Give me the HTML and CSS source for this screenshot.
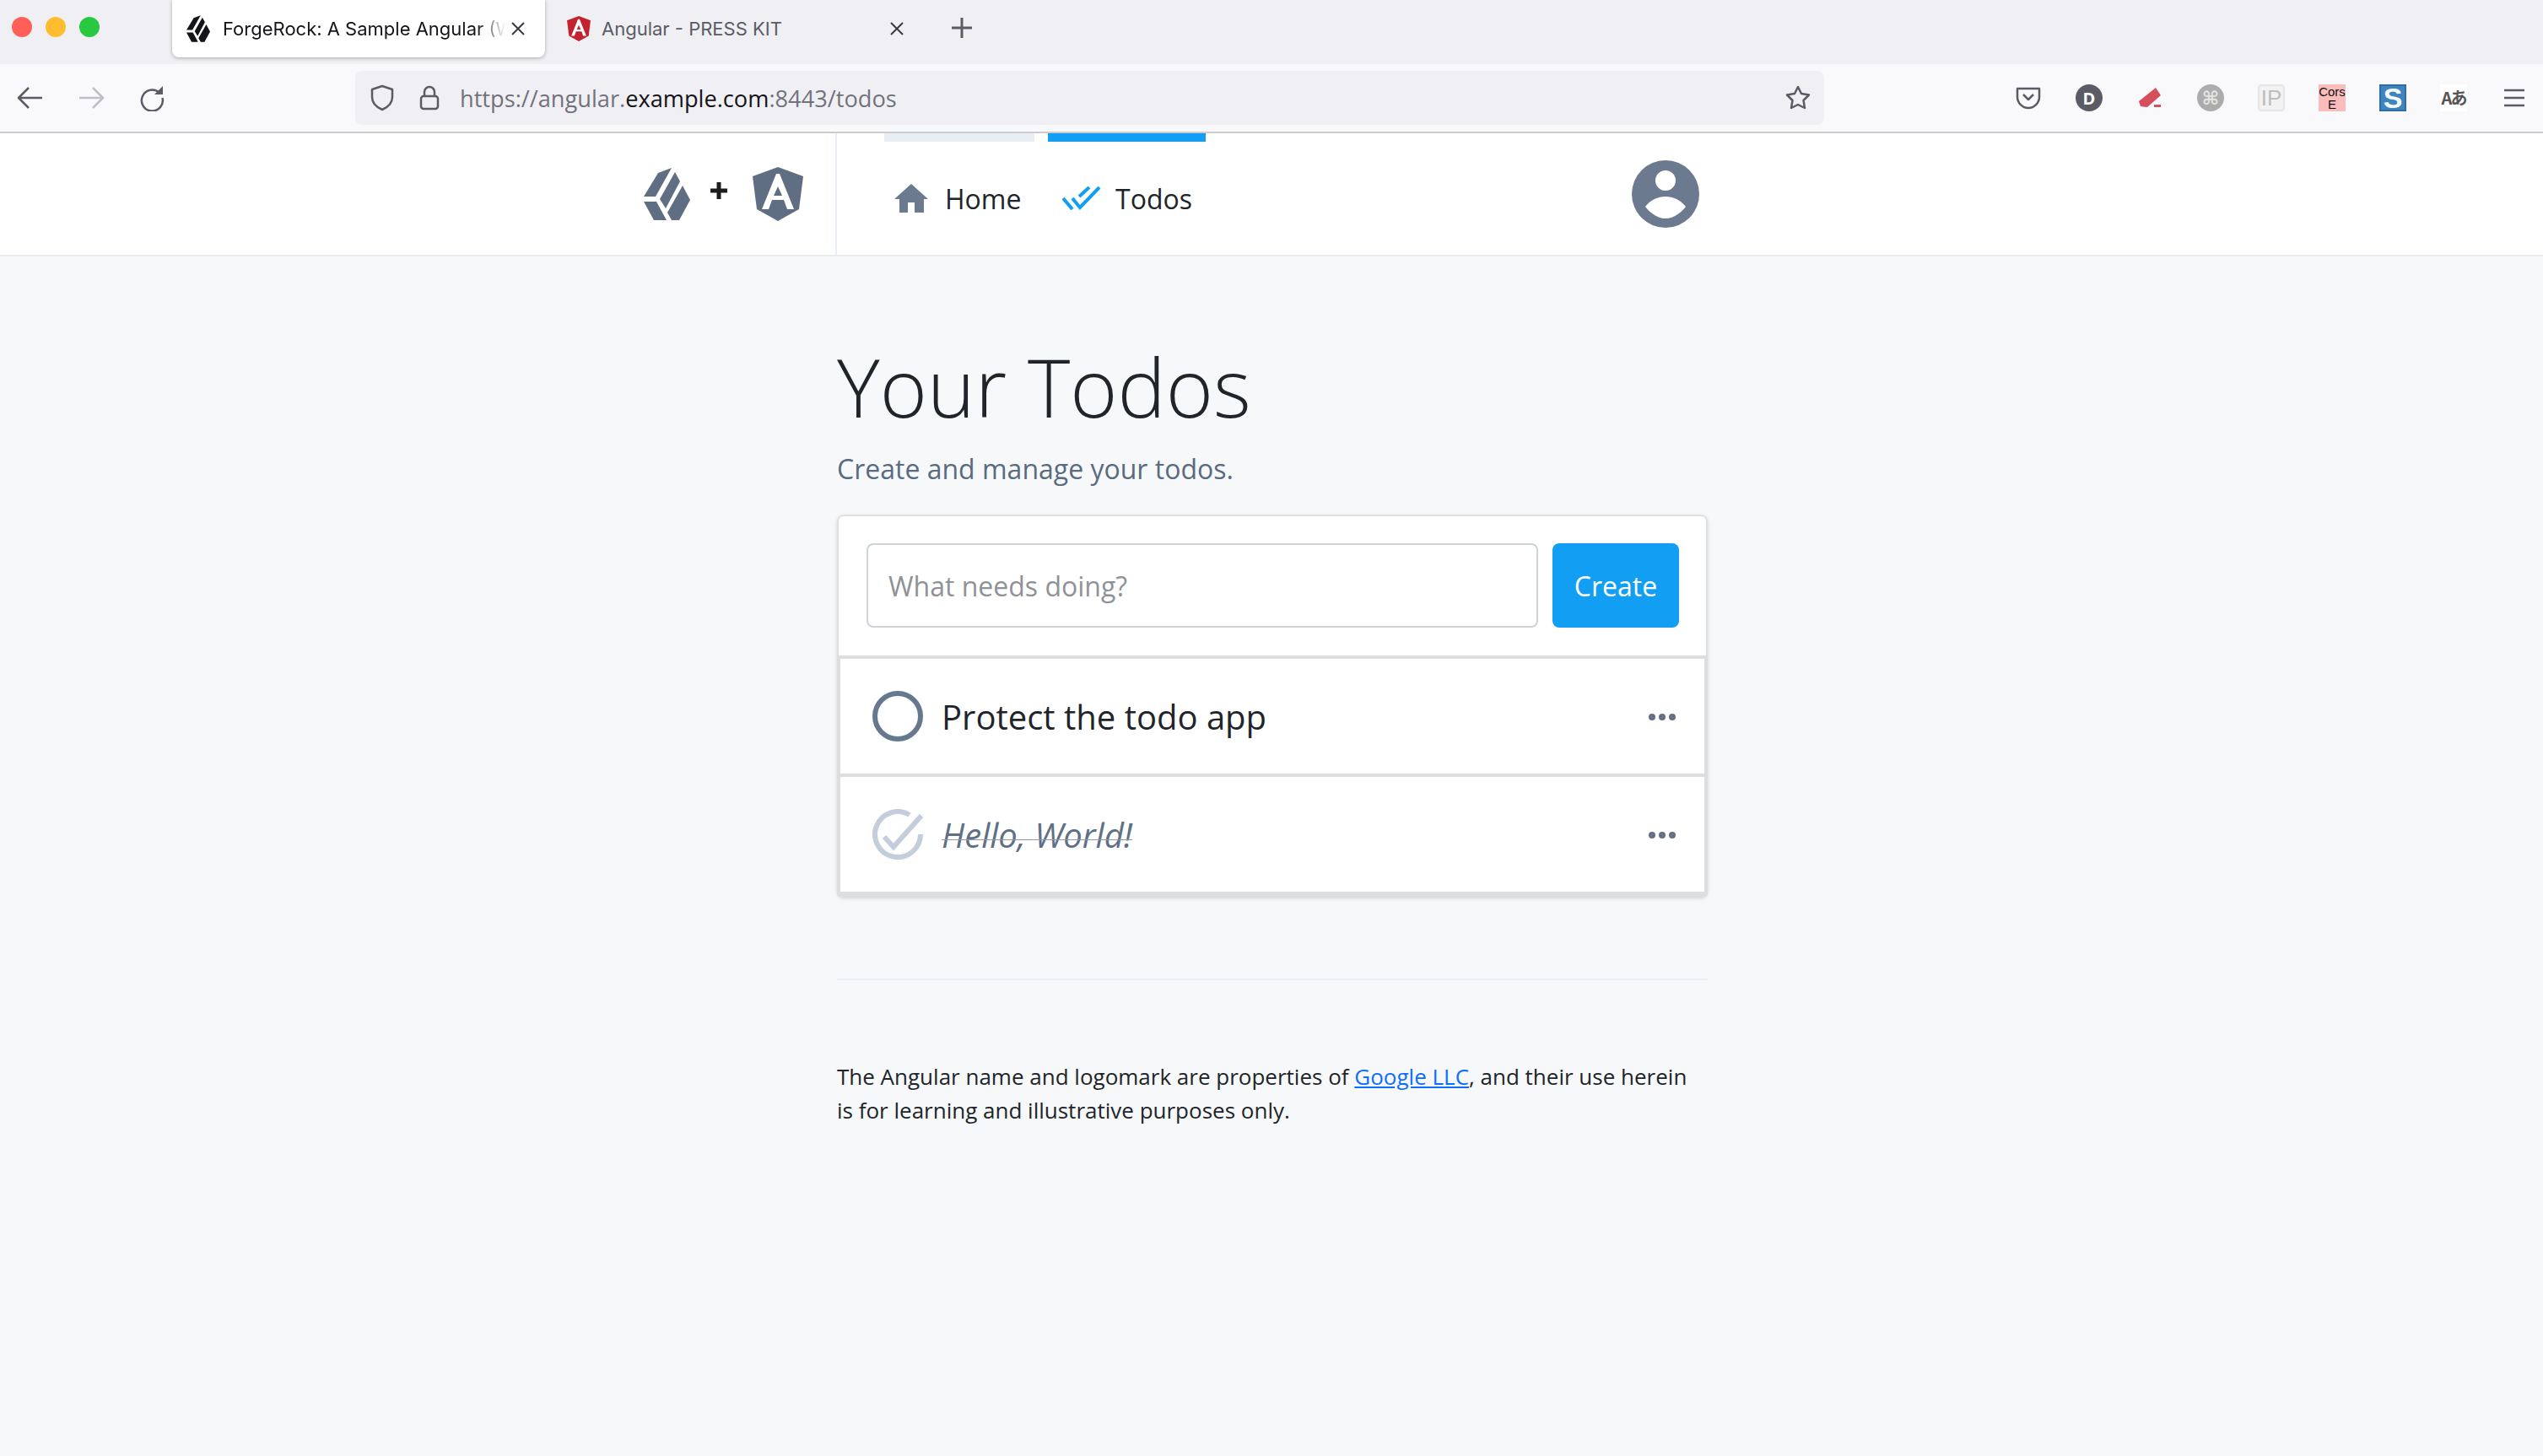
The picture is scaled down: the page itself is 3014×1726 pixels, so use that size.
FILE: index.html
```html
<!DOCTYPE html>
<html lang="en">
<head>
<meta charset="utf-8">
<title>ForgeRock: A Sample Angular</title>
<link rel="stylesheet" href="styles.css">
</head>
<body>
<svg class="defs" aria-hidden="true">
  <symbol id="fr" viewBox="0 0 55 62">
    <path d="M17 6 33 0 14 34H0Z"/>
    <path d="M37 5 43 16 26 48 19 37Z"/>
    <path d="M46 21 55 38 42 62H33L28 53Z"/>
    <path d="M0 40H15L27 62H12Z"/>
  </symbol>
  <symbol id="ng" viewBox="0 0 60 64">
    <path d="M30 0 60 11 55 50 30 64 5 50 0 11Z"/>
    <path fill="#fff" fill-rule="evenodd" d="M28 8H32L49 50H41L37 39H23L19 50H11ZM30 23 25 34H35Z"/>
  </symbol>
</svg>

<div class="tabbar">
  <div class="lights"><i class="light red"></i><i class="light yellow"></i><i class="light green"></i></div>
  <div class="tab active">
    <svg class="favicon black"><use href="#fr"/></svg>
    <span class="tab-title fade">ForgeRock: A Sample Angular (W</span>
    <svg class="x" viewBox="0 0 16 16"><path d="M1 1 15 15M15 1 1 15"/></svg>
  </div>
  <div class="tab second">
    <svg class="favicon crimson"><use href="#ng"/></svg>
    <span class="tab-title muted">Angular - PRESS KIT</span>
    <svg class="x" viewBox="0 0 16 16"><path d="M1 1 15 15M15 1 1 15"/></svg>
  </div>
  <svg class="plus" viewBox="0 0 24 24"><path d="M12 0V24M0 12H24"/></svg>
</div>

<div class="toolbar">
  <div class="nav-btns">
    <svg class="ti" viewBox="0 0 32 32"><path d="M30 16H3M14 4 2 16 14 28"/></svg>
    <svg class="ti dim" viewBox="0 0 32 32"><path d="M2 16H29M18 4 30 16 18 28"/></svg>
    <svg class="ti" viewBox="0 0 32 32"><path d="M25 10A12.5 12.5 0 1 0 28.500 16"/><path class="solid" d="M29 2V12H19Z"/></svg>
  </div>
  <div class="urlbar">
    <svg class="ti" viewBox="0 0 32 32"><path d="M16 2 28 6V15C28 22 23 27 16 30 9 27 4 22 4 15V6Z"/></svg>
    <svg class="ti" viewBox="0 0 32 32"><rect x="6" y="14" width="20" height="15" rx="3"/><path d="M10 14V9A6 6 0 0 1 22 9V14"/></svg>
    <div class="url">https://angular.<b>example.com</b>:8443/todos</div>
    <svg class="ti star" viewBox="0 0 32 32"><path d="M16 3 20 11 29 12.500 22.500 19 24 28 16 24 8 28 9.500 19 3 12.500 12 11Z"/></svg>
  </div>
  <div class="exts">
    <svg class="ti" viewBox="0 0 32 32"><path d="M3 5H29V15C29 22 23 28 16 28 9 28 3 22 3 15Z"/><path d="M10 12 16 18 22 12"/></svg>
    <div class="ext ext-d">D</div>
    <svg class="ext" viewBox="0 0 32 32"><path class="eraser" d="M23 4 29 13 13 27 5 26 3 20Z"/><path class="eraser" d="M21 24H29V27H21Z"/></svg>
    <div class="ext ext-cmd">⌘</div>
    <div class="ext ext-ip">IP</div>
    <div class="ext ext-cors">Cors<br>E</div>
    <div class="ext ext-s">S</div>
    <div class="ext ext-a">Aあ</div>
    <svg class="ti" viewBox="0 0 32 32"><path d="M4 7H28M4 16H28M4 25H28"/></svg>
  </div>
</div>

<header class="app-header">
  <div class="brand">
    <svg class="logo-fr"><use href="#fr"/></svg>
    <svg class="logo-plus" viewBox="0 0 20 20"><path d="M10 0V20M0 10H20"/></svg>
    <svg class="logo-ng"><use href="#ng"/></svg>
  </div>
  <nav class="main-nav">
    <a class="nav-item home">
      <svg class="home-icon" viewBox="0 0 40 34"><path fill-rule="evenodd" d="M20 0 40 18H35V34H24V22H16V34H6V18H0Z"/></svg>
      Home
    </a>
    <a class="nav-item current">
      <svg class="todos-icon" viewBox="0 0 48 28"><path d="M1 14 12 27M12 14 21 25 44 1M20 12 32 1"/></svg>
      Todos
    </a>
  </nav>
  <svg class="avatar" viewBox="0 0 80 80"><path fill-rule="evenodd" d="M40 0A40 40 0 1 1 40 80 40 40 0 1 1 40 0ZM40 12A12 12 0 1 0 40 36 12 12 0 1 0 40 12ZM16 55C22 63 31 69 40 69S58 63 64 55C58 47 49 43 40 43S22 47 16 55Z"/></svg>
</header>

<main class="content">
  <h1 class="title">Your Todos</h1>
  <p class="subtitle">Create and manage your todos.</p>
  <section class="card">
    <form class="card-top">
      <input class="todo-input" type="text" placeholder="What needs doing?">
      <button class="create" type="button">Create</button>
    </form>
    <div class="item">
      <svg class="check" viewBox="0 0 60 60"><circle class="ring" cx="30" cy="30" r="27"/></svg>
      <span class="item-text">Protect the todo app</span>
      <span class="dots"><i></i><i></i><i></i></span>
    </div>
    <div class="item last">
      <svg class="check" viewBox="0 0 60 60"><path class="ring done" d="M44 7A27 27 0 1 0 57 30"/><path class="ring done" d="M14 33 25 45 58 8"/></svg>
      <div class="item-text"><span class="completed">Hello, World!</span></div>
      <span class="dots"><i></i><i></i><i></i></span>
    </div>
  </section>
  <hr class="rule">
  <p class="legal">The Angular name and logomark are properties of <a class="legal-link">Google LLC</a>, and their use herein is for learning and illustrative purposes only.</p>
</main>
</body>
</html>
```
FILE: styles.css
```css
* { box-sizing: border-box; }
html, body { margin: 0; }
body {
  min-height: 1726px;
  background: #f6f8fa;
  font-family: "Open Sans", sans-serif;
  color: #212529;
  overflow: hidden;
}
.defs { width: 0; height: 0; display: block; }

/* Browser chrome */
.tabbar {
  height: 76px;
  background: #f0f0f4;
  display: flex;
  align-items: flex-start;
  font-family: Inter, sans-serif;
}
.lights { display: flex; gap: 16px; padding: 20px 0 0 14px; width: 204px; }
.light { width: 24px; height: 24px; border-radius: 50%; display: block; }
.red { background: #ff5f57; }
.yellow { background: #febc2e; }
.green { background: #28c840; }
.tab {
  width: 442px;
  height: 68px;
  display: flex;
  align-items: center;
  padding: 0 24px 0 17px;
  margin-right: 7px;
  border-radius: 0 0 8px 8px;
}
.tab.active { background: #fff; box-shadow: 0 1px 4px rgba(0, 0, 0, .3); }
.favicon { width: 28px; height: 32px; flex: none; }
.second { padding-left: 19px; }
.second .tab-title { margin-left: 13px; }
.black { fill: #15141a; }
.crimson { fill: #c3222f; }
.tab-title {
  flex: 1;
  margin-left: 15px;
  font-size: 22px;
  white-space: nowrap;
  overflow: hidden;
  color: #15141a;
}
.tab-title.muted { color: #5b5b66; }
.fade { mask-image: linear-gradient(90deg, #000 88%, transparent 98%); }
.x { width: 16px; height: 16px; flex: none; fill: none; stroke: #3a3a44; stroke-width: 2; }
.plus { width: 24px; height: 24px; margin: 21px 0 0 26px; fill: none; stroke: #5b5b66; stroke-width: 3; }

.toolbar {
  height: 82px;
  background: #f9f9fb;
  border-bottom: 2px solid #ccc;
  display: flex;
  align-items: center;
  padding: 0 18px 0 20px;
}
.ti { width: 32px; height: 32px; flex: none; fill: none; stroke: #5b5b66; stroke-width: 2.500; stroke-linejoin: round; }
.ti.dim { stroke: #bfbfc5; }
.solid { fill: #5b5b66; stroke: none; }
.nav-btns { display: flex; gap: 40px; width: 401px; }
.urlbar {
  width: 1741px;
  height: 64px;
  background: #f0f0f4;
  border-radius: 8px;
  display: flex;
  align-items: center;
  gap: 24px;
  padding: 0 15px 0 16px;
}
.url { flex: 1; font-size: 27.200px; color: #72727c; margin-left: -4px; white-space: nowrap; }
.url b { font-weight: 400; color: #15141a; }
.exts { display: flex; gap: 40px; margin-left: 226px; align-items: center; }
.ext { width: 32px; height: 32px; flex: none; display: flex; align-items: center; justify-content: center; text-align: center; }
.eraser { fill: #d44e5c; }
.ext-d { background: #5b5b66; color: #fff; border-radius: 50%; font: 700 20px "Open Sans", sans-serif; }
.ext-cmd { background: #acacac; color: #e4e4e4; border-radius: 50%; font: 700 22px "DejaVu Sans", sans-serif; }
.ext-ip { background: #f2f2f2; color: #bdbdbd; border: 2px solid #e6e6e6; border-radius: 4px; font: 400 26px/28px "Liberation Sans", sans-serif; }
.ext-cors { background: #fbbcbc; color: #111; font: 400 15px/15px "Liberation Sans", sans-serif; }
.ext-s { background: #3f85bd; color: #f4f8fb; border: 2px solid #2e6ea6; font: 700 34px/28px "Liberation Sans", sans-serif; }
.ext-a { background: #fff; color: #555; font: 700 20px/28px "Noto Sans CJK JP", sans-serif; white-space: nowrap; letter-spacing: -2px; }

/* App header */
.app-header {
  height: 146px;
  background: #fff;
  border-bottom: 2px solid #e9edf1;
  display: flex;
  align-items: stretch;
}
.brand {
  width: 992px;
  border-right: 2px solid #e9eff5;
  display: flex;
  align-items: center;
  justify-content: flex-end;
  padding-right: 38px;
}
.logo-fr { width: 55px; height: 62px; fill: #5f6e82; }
.logo-plus { width: 20px; height: 20px; margin: -8px 30px 0 24px; fill: none; stroke: #1c1c1c; stroke-width: 5; }
.logo-ng { width: 60px; height: 64px; fill: #5f6e82; }
.main-nav { display: flex; gap: 16px; padding-left: 56px; }
.nav-item {
  display: flex;
  align-items: center;
  gap: 20px;
  padding: 0 12px;
  border-top: 10px solid #e7eef4;
  font-size: 32px;
  color: #212529;
  width: 178px;
  height: 144px;
}
.nav-item.current { border-top-color: #129ef2; width: 187px; gap: 15px; padding: 0 17px; }
.home-icon { width: 40px; height: 34px; fill: #6b7a8f; flex: none; }
.todos-icon { width: 48px; height: 28px; fill: none; stroke: #129ef2; stroke-width: 4; flex: none; }
.avatar { width: 80px; height: 80px; fill: #6b7a8f; align-self: center; margin-left: 505px; }

/* Main */
.content { width: 1032px; margin-left: 992px; padding-top: 96px; }
.title { margin: 0; font-weight: 300; font-size: 96px; line-height: 1.2; color: #212529; letter-spacing: 0; }
.subtitle { margin: 17px 0 0; font-size: 32px; line-height: 48px; color: #5a6b80; }
.card { margin-top: 30px; background: #fff; border-radius: 8px; box-shadow: 0 2px 4px rgba(0, 0, 0, .15); }
.card-top {
  height: 167px;
  padding: 32px 32px 0 33px;
  display: flex;
  gap: 17px;
  align-items: flex-start;
  border: 2px solid #e0e0e0;
  border-bottom: 0;
  border-radius: 8px 8px 0 0;
}
.todo-input {
  width: 796px;
  height: 100px;
  flex: none;
  border: 2px solid #ced3da;
  border-radius: 8px;
  padding: 0 24px;
  font: 400 32px "Open Sans", sans-serif;
  background: #fff;
  color: #212529;
}
.todo-input::placeholder { color: #8f9296; opacity: 1; }
.create {
  width: 150px;
  height: 100px;
  flex: none;
  background: #129ef2;
  color: #fff;
  border: 0;
  border-radius: 8px;
  font: 400 32px "Open Sans", sans-serif;
}
.item {
  height: 140px;
  background: #fff;
  border: 4px solid #dedede;
  border-bottom: 0;
  display: flex;
  align-items: center;
  padding: 0 34px 0 38px;
}
.item.last { height: 146px; border-bottom: 6px solid #dedede; border-radius: 0 0 4px 4px; }
.check { width: 60px; height: 60px; flex: none; }
.ring { fill: none; stroke: #667890; stroke-width: 6; }
.ring.done { stroke: #c3cddb; }
.item-text { flex: 1; margin-left: 22px; font-size: 40px; color: #212529; }
.completed {
  position: relative;
  display: inline-block;
  font-style: italic;
  color: #5f6f85;
}
.completed::after {
  content: "";
  position: absolute;
  left: 0;
  right: 0;
  top: 33px;
  height: 1px;
  background: #8f98a4;
}
.dots { display: flex; gap: 4px; margin-top: 2px; }
.dots i { width: 8px; height: 8px; border-radius: 50%; background: #667085; display: block; }
.rule { margin: 97px 0 0; border: 0; height: 2px; background: #e9eff5; }
.legal { margin: 94px 0 0; font-size: 26px; line-height: 40px; color: #212529; }
.legal-link { color: #0d6efd; text-decoration: underline; }
```
